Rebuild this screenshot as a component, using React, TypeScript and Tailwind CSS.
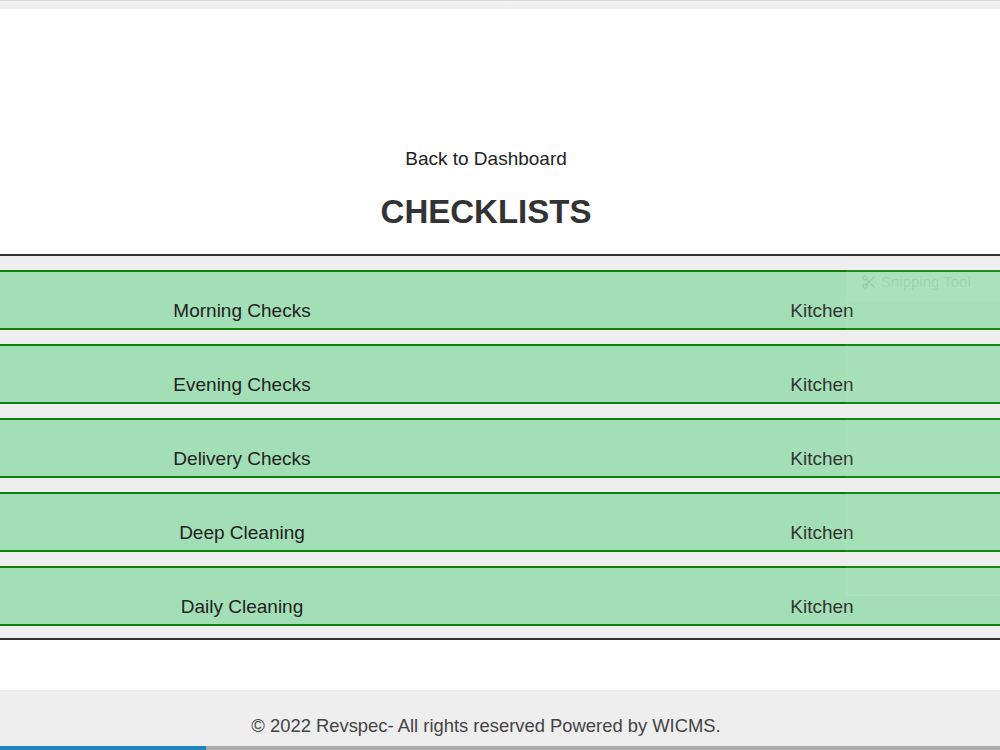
import { Scissors } from "lucide-react";

interface Checklist {
  id: number;
  name: string;
  area: string;
}

const checklists: Checklist[] = [
  { id: 1, name: "Morning Checks", area: "Kitchen" },
  { id: 2, name: "Evening Checks", area: "Kitchen" },
  { id: 3, name: "Delivery Checks", area: "Kitchen" },
  { id: 4, name: "Deep Cleaning", area: "Kitchen" },
  { id: 5, name: "Daily Cleaning", area: "Kitchen" },
];

export default function App() {
  return (
    <div
      className="relative w-[1000px] h-[750px] overflow-hidden bg-white flex flex-col"
      style={{ fontFamily: '"Liberation Sans", Arial, sans-serif' }}
    >
      {/* top strip */}
      <div className="h-px bg-[#d4d7dc]" />
      <div className="h-[8px] bg-gradient-to-b from-[#f5f5f5] to-[#ececec]" />

      <div className="pr-[28px] pt-[139px] text-center">
        <a href="#" className="text-[19px] leading-[22px] text-[#222]">
          Back to Dashboard
        </a>
        <h1 className="mt-[22px] text-[33px] leading-[36px] font-bold text-[#333]">
          CHECKLISTS
        </h1>
      </div>

      {/* checklist table */}
      <div className="mt-[24px] border-y-2 border-[#333] bg-[#eeeeee] flex flex-col gap-[14px] pt-[14px] pb-[12px]">
        {checklists.map((item) => (
          <div
            key={item.id}
            className="h-[60px] border-y-2 border-[#0c800c] bg-[#a3dfb6] grid grid-cols-[484px_1fr_356px] pt-[28px] text-[19px] leading-[21px] text-[#222]"
          >
            <div className="text-center">{item.name}</div>
            <div />
            <div className="text-center text-[#333]">{item.area}</div>
          </div>
        ))}
      </div>

      <div className="h-[50px]" />

      {/* footer */}
      <footer className="flex-1 bg-[#eeeeee] flex flex-col">
        <div className="flex-1 pr-[28px] pt-[25px] text-center text-[18.4px] leading-[22px] text-[#444]">
          © 2022 Revspec- All rights reserved Powered by WICMS.
        </div>
        <div className="h-[4px] flex">
          <div className="w-[206px] bg-[#1b86c0]" />
          <div className="flex-1 bg-[#ababab]" />
        </div>
      </footer>

      {/* faint floating window left on top of the page */}
      <div className="absolute left-[846px] top-[262px] w-[160px] h-[334px] bg-white/[0.04] border border-white/[0.06]">
        <div className="h-[38px] bg-white/[0.06] flex items-center gap-[4px] pl-[14px] text-[15px] text-black/[0.08]">
          <Scissors className="w-[16px] h-[16px]" />
          <span>Snipping Tool</span>
        </div>
      </div>
    </div>
  );
}
